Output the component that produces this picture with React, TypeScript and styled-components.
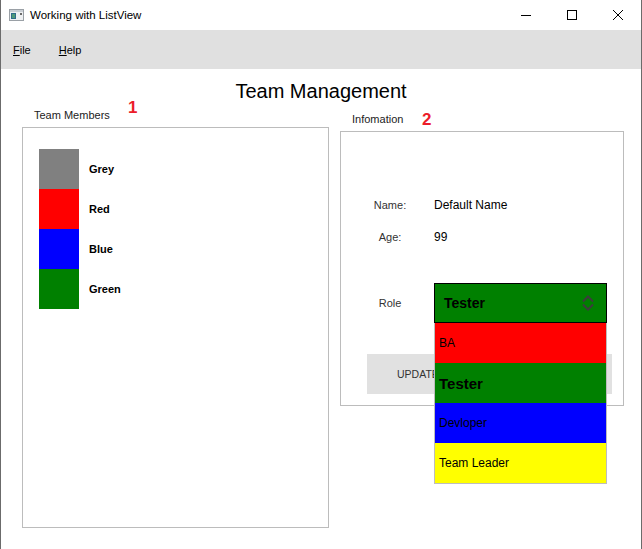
import React from 'react';
import styled, { createGlobalStyle } from 'styled-components';

const Global = createGlobalStyle`
  html, body { margin: 0; padding: 0; background: #fff; }
  body { font-family: "Liberation Sans", Arial, sans-serif; overflow: hidden; }
`;

const Window = styled.div`
  width: 642px;
  height: 549px;
  box-sizing: border-box;
  border-left: 1px solid #6b6b6b;
  border-right: 1px solid #6b6b6b;
  background: #fff;
  display: flex;
  flex-direction: column;
`;

const TitleBar = styled.div`
  height: 30px;
  display: flex;
  align-items: center;
  flex-shrink: 0;
`;

const AppIcon = styled.svg`
  margin-left: 8px;
  flex-shrink: 0;
`;

const TitleText = styled.span`
  margin-left: 6px;
  font-size: 11.5px;
  color: #000;
  flex: 1;
`;

const CaptionButton = styled.div`
  width: 46px;
  height: 30px;
  display: flex;
  align-items: center;
  justify-content: center;
`;

const MenuBar = styled.div`
  height: 39px;
  flex-shrink: 0;
  background: #e0e0e0;
  display: flex;
  align-items: center;
  padding-left: 12px;
  gap: 28px;
`;

const MenuItem = styled.span`
  font-size: 11px;
  color: #000;
  & u { text-decoration: underline; }
`;

const Heading = styled.div`
  padding-top: 10px;
  font-size: 20px;
  line-height: 24px;
  text-align: center;
  color: #000;
`;

const Columns = styled.div`
  display: flex;
  align-items: flex-start;
  padding-left: 21px;
  gap: 11px;
`;

const Group = styled.div<{ $w: number; $mt: number }>`
  display: flex;
  flex-direction: column;
  width: ${p => p.$w}px;
  margin-top: ${p => p.$mt}px;
`;

const GroupLabel = styled.div`
  position: relative;
  height: 14px;
  line-height: 14px;
  font-size: 11px;
  padding-left: 12px;
  color: #222;
  margin-bottom: 5px;
`;

const Badge = styled.span<{ $x: number; $y: number }>`
  position: absolute;
  left: ${p => p.$x}px;
  top: ${p => p.$y}px;
  font-size: 17px;
  line-height: 1;
  font-weight: bold;
  color: #ec1c2a;
`;

const GroupBox = styled.div<{ $h: number }>`
  border: 1px solid #bcbcbc;
  box-sizing: border-box;
  height: ${p => p.$h}px;
`;

const SwatchList = styled.div`
  padding: 21px 0 0 16px;
  display: flex;
  flex-direction: column;
`;

const SwatchRow = styled.div`
  display: flex;
  align-items: center;
  height: 40px;
  gap: 10px;
`;

const Swatch = styled.div<{ $c: string }>`
  width: 40px;
  height: 40px;
  background: ${p => p.$c};
`;

const SwatchLabel = styled.span`
  font-size: 11px;
  font-weight: bold;
  color: #000;
`;

const InfoBody = styled.div`
  padding: 63px 0 0 5px;
  display: flex;
  flex-direction: column;
  align-items: flex-start;
`;

const FieldRow = styled.div<{ $h: number; $mt: number }>`
  display: grid;
  grid-template-columns: 88px 173px;
  align-items: center;
  height: ${p => p.$h}px;
  margin-top: ${p => p.$mt}px;
`;

const FieldLabel = styled.span`
  text-align: center;
  font-size: 11px;
  color: #333;
`;

const FieldValue = styled.span`
  font-size: 12px;
  color: #000;
`;

const ComboWrap = styled.div`
  position: relative;
  height: 40px;
`;

const Combo = styled.div`
  height: 40px;
  box-sizing: border-box;
  border: 1px solid #000;
  background: #008000;
  display: flex;
  align-items: center;
  justify-content: space-between;
  padding: 0 12px 0 9px;
  font-weight: bold;
  font-size: 14px;
  color: #000;
`;

const Popup = styled.div`
  position: absolute;
  top: 100%;
  left: 0;
  width: 173px;
  box-sizing: border-box;
  border: 1px solid #bdbdbd;
  border-top: none;
  z-index: 5;
`;

const PopupItem = styled.div<{ $c: string; $bold?: boolean }>`
  height: 40px;
  display: flex;
  align-items: center;
  padding-left: 4px;
  background: ${p => p.$c};
  font-size: ${p => (p.$bold ? 15 : 12)}px;
  font-weight: ${p => (p.$bold ? 'bold' : 'normal')};
  color: #000;
`;

const UpdateButton = styled.button`
  margin: 31px 0 0 21px;
  width: 245px;
  height: 40px;
  background: #e1e1e1;
  border: none;
  font-family: "Liberation Sans", Arial, sans-serif;
  font-size: 10.5px;
  color: #333;
  text-align: left;
  padding: 0 0 0 30px;
`;

const members = [
  { name: 'Grey', color: '#808080' },
  { name: 'Red', color: '#ff0000' },
  { name: 'Blue', color: '#0000ff' },
  { name: 'Green', color: '#008000' },
];

const roles = [
  { name: 'BA', color: '#ff0000' },
  { name: 'Tester', color: '#008000', bold: true },
  { name: 'Devloper', color: '#0000ff' },
  { name: 'Team Leader', color: '#ffff00' },
];

export default function App() {
  return (
    <>
      <Global />
      <Window>
        <TitleBar>
          <AppIcon width="15" height="12" viewBox="0 0 15 12">
            <rect x="0.5" y="0.5" width="14" height="11" fill="#eef0f2" stroke="#9aa0a6" />
            <rect x="1" y="1" width="13" height="2" fill="#c9ced4" />
            <rect x="2" y="4" width="5" height="6" fill="#2f6d8a" />
            <rect x="3" y="5" width="3" height="4" fill="#4f9a7a" />
            <rect x="11" y="4" width="2" height="2" fill="#6a6a6a" />
          </AppIcon>
          <TitleText>Working with ListView</TitleText>
          <CaptionButton>
            <svg width="10" height="10" viewBox="0 0 10 10">
              <path d="M0 5.5 H10" stroke="#000" strokeWidth="1" />
            </svg>
          </CaptionButton>
          <CaptionButton>
            <svg width="10" height="10" viewBox="0 0 10 10">
              <rect x="0.5" y="0.5" width="9" height="9" fill="none" stroke="#000" strokeWidth="1" />
            </svg>
          </CaptionButton>
          <CaptionButton>
            <svg width="10" height="10" viewBox="0 0 10 10">
              <path d="M0 0 L10 10 M10 0 L0 10" stroke="#000" strokeWidth="1" />
            </svg>
          </CaptionButton>
        </TitleBar>
        <MenuBar>
          <MenuItem><u>F</u>ile</MenuItem>
          <MenuItem><u>H</u>elp</MenuItem>
        </MenuBar>
        <Heading>Team Management</Heading>
        <Columns>
          <Group $w={307} $mt={5}>
            <GroupLabel>
              Team Members
              <Badge $x={106} $y={-9.5}>1</Badge>
            </GroupLabel>
            <GroupBox $h={401}>
              <SwatchList>
                {members.map(m => (
                  <SwatchRow key={m.name}>
                    <Swatch $c={m.color} />
                    <SwatchLabel>{m.name}</SwatchLabel>
                  </SwatchRow>
                ))}
              </SwatchList>
            </GroupBox>
          </Group>
          <Group $w={284} $mt={9}>
            <GroupLabel>
              Infomation
              <Badge $x={82} $y={-1}>2</Badge>
            </GroupLabel>
            <GroupBox $h={275}>
              <InfoBody>
                <FieldRow $h={20} $mt={0}>
                  <FieldLabel>Name:</FieldLabel>
                  <FieldValue>Default Name</FieldValue>
                </FieldRow>
                <FieldRow $h={20} $mt={12}>
                  <FieldLabel>Age:</FieldLabel>
                  <FieldValue>99</FieldValue>
                </FieldRow>
                <FieldRow $h={40} $mt={36}>
                  <FieldLabel>Role</FieldLabel>
                  <ComboWrap>
                    <Combo>
                      <span>Tester</span>
                      <svg width="12" height="18" viewBox="0 0 12 18">
                        <path d="M1 7.5 L6 2.5 L11 7.5 M1 10.5 L6 15.5 L11 10.5" fill="none" stroke="#3c3c3c" strokeWidth="2" />
                      </svg>
                    </Combo>
                    <Popup>
                      {roles.map(r => (
                        <PopupItem key={r.name} $c={r.color} $bold={r.bold}>{r.name}</PopupItem>
                      ))}
                    </Popup>
                  </ComboWrap>
                </FieldRow>
                <UpdateButton>UPDATE</UpdateButton>
              </InfoBody>
            </GroupBox>
          </Group>
        </Columns>
      </Window>
    </>
  );
}
